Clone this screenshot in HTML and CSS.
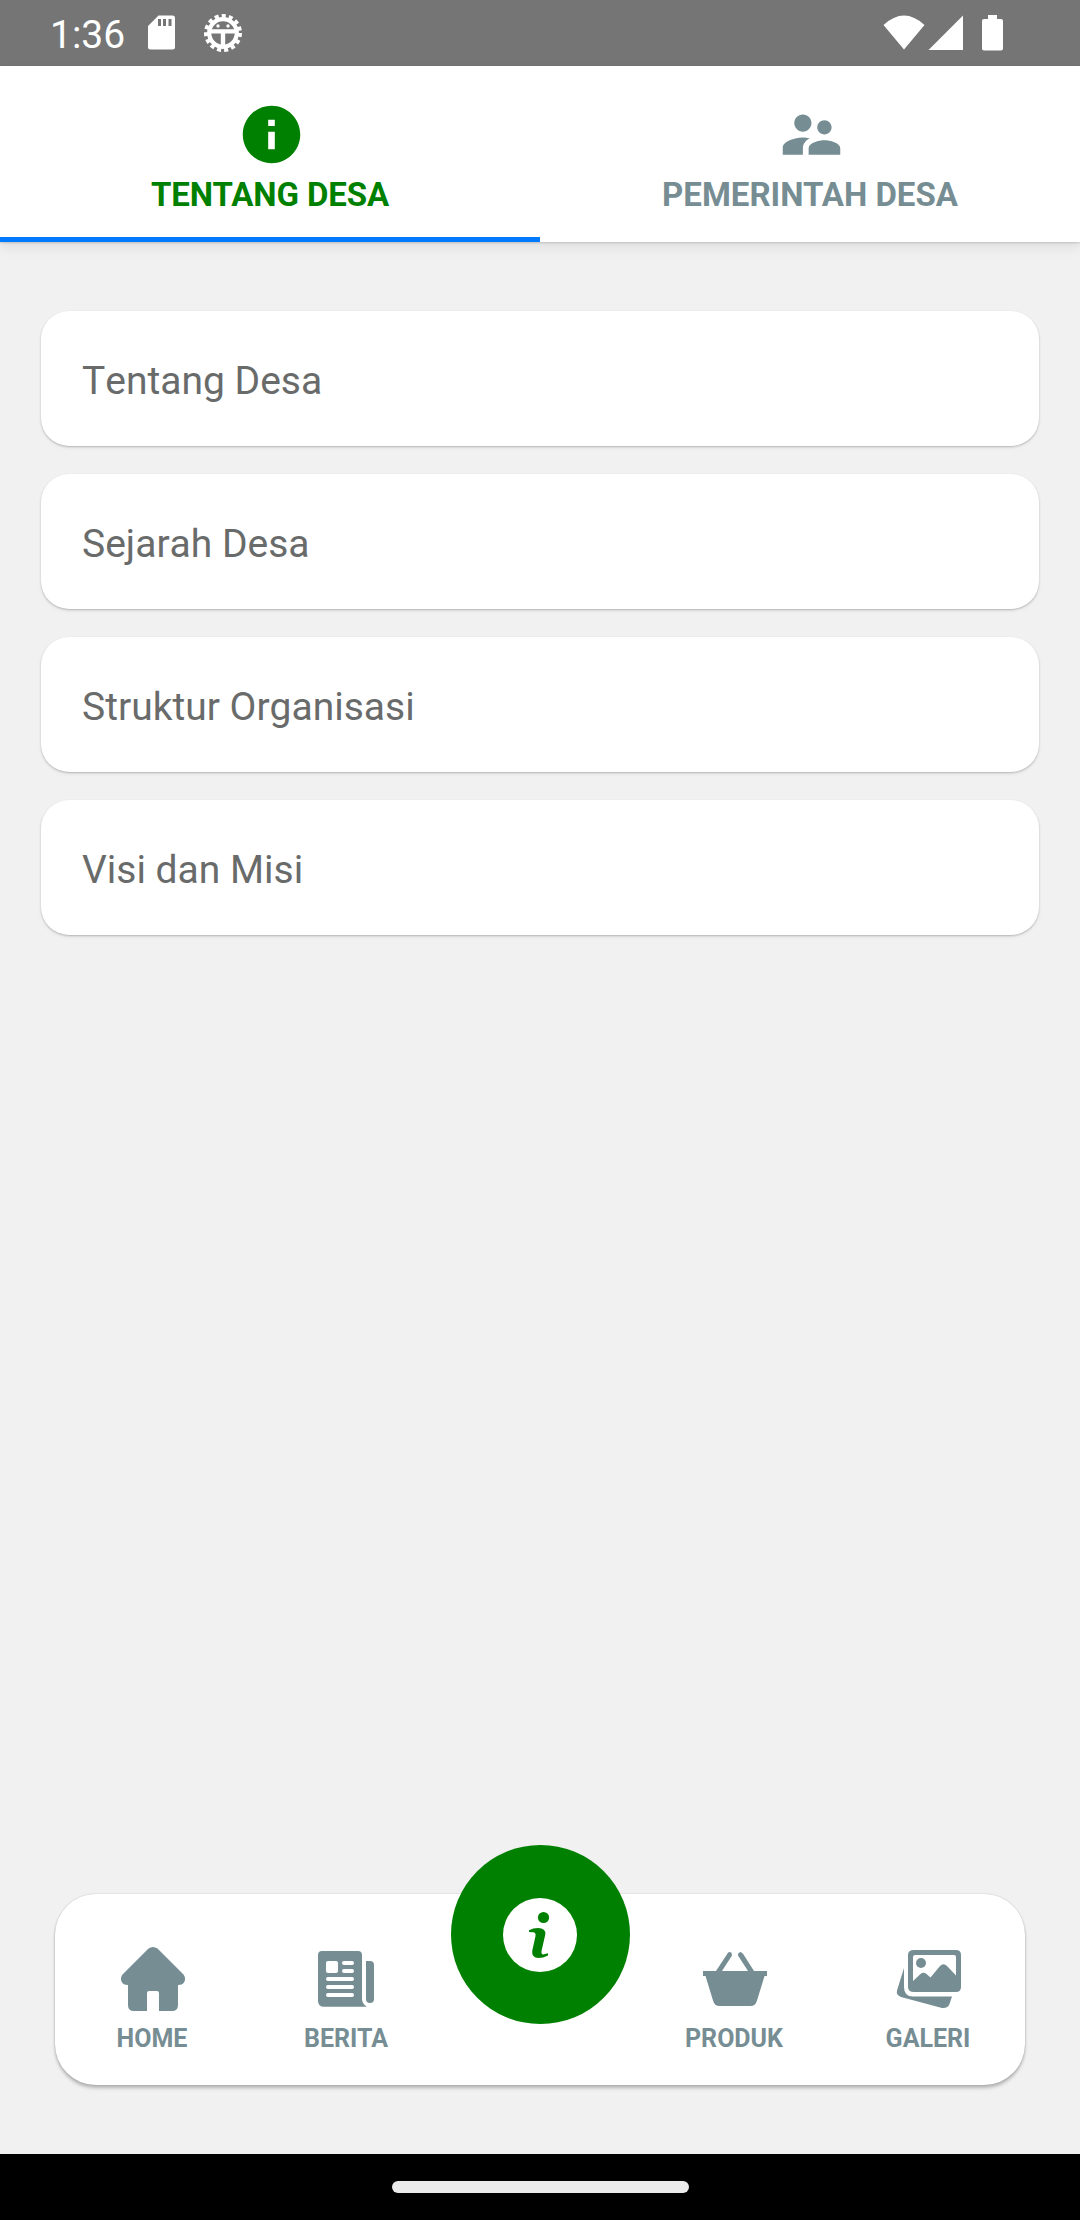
FILE: index.html
```html
<!DOCTYPE html>
<html lang="id">
<head>
<meta charset="utf-8">
<title>Tentang Desa</title>
<link rel="stylesheet" href="styles.css">
</head>
<body>
<div class="screen">
  <header class="status">
    <span class="clock">1:36</span>
    <svg class="sd" width="28" height="36" viewBox="0 0 28 36"><path fill-rule="evenodd" d="M10.500 0.500H24.500Q27 0.500 27 3V32Q27 34.500 24.500 34.500H2.500Q0 34.500 0 32V11ZM10 4v7h3V4zM15 4v7h3V4zM20.500 4v7h3V4z"/></svg>
    <svg class="gear" width="40" height="40" viewBox="-20 -20 40 40">
      <circle r="13.800" fill="none" stroke="#fff" stroke-width="4.200"/>
      <circle r="17" fill="none" stroke="#fff" stroke-width="4" stroke-dasharray="4 3.121"/>
      <path d="M-14-3.800H14V.4H2.200V14H-2.200V.4H-14z"/><circle cx="-5" cy="-7" r="1.700"/><circle cx="5" cy="-7" r="1.700"/>
    </svg>
    <div class="signals">
      <svg width="42" height="36" viewBox="0 0 42 36"><path d="M0.500 10Q21-9 41.500 10L21 34.500Z"/></svg>
      <svg class="cell" width="36" height="36" viewBox="0 0 36 36"><path d="M35 0.500V35H0.500Z"/></svg>
      <svg class="battery" width="21" height="36" viewBox="0 0 21 36"><path d="M6 0H15V4H19Q21 4 21 6V33.500Q21 35.500 19 35.500H2Q0 35.500 0 33.500V6Q0 4 2 4H6Z"/></svg>
    </div>
  </header>

  <nav class="tabs">
    <div class="tab tab-active">
      <svg width="69" height="69" viewBox="0 0 24 24"><path d="M12 2C6.480 2 2 6.480 2 12s4.480 10 10 10 10-4.480 10-10S17.520 2 12 2zm1.150 15.150h-2.300v-6.150h2.300zm0-8.100h-2.300V6.850h2.300z"/></svg>
      <span>TENTANG DESA</span>
    </div>
    <div class="tab">
      <svg width="69" height="69" viewBox="0 0 24 24"><path d="M16.500 12c1.380 0 2.490-1.120 2.490-2.500S17.880 7 16.500 7C15.120 7 14 8.120 14 9.500s1.120 2.500 2.500 2.500zM9 11c1.660 0 2.990-1.340 2.990-3S10.660 5 9 5C7.340 5 6 6.340 6 8s1.340 3 3 3zm7.500 3c-1.830 0-5.500.920-5.500 2.750V19h11v-2.250c0-1.830-3.670-2.750-5.500-2.750zM9 13c-2.330 0-7 1.170-7 3.500V19h7v-2.250c0-.850.330-2.340 2.370-3.470C10.500 13.100 9.660 13 9 13z"/></svg>
      <span>PEMERINTAH DESA</span>
    </div>
  </nav>

  <main class="list">
    <div class="card">Tentang Desa</div>
    <div class="card">Sejarah Desa</div>
    <div class="card">Struktur Organisasi</div>
    <div class="card">Visi dan Misi</div>
  </main>

  <nav class="dock">
    <div class="item">
      <svg width="80" height="80" viewBox="0 0 80 80"><path d="M36.500 9.500Q41 6.500 45.500 9.500L71.500 35.500Q74 39 72.500 42.500Q71 46 66 46V66Q66 72 60 72H47V54Q47 52 45 52H37Q35 52 35 54V72H22Q16 72 16 66V46Q11 46 9.500 42.500Q8 39 10.500 35.500Z"/></svg>
      <span>HOME</span>
    </div>
    <div class="item">
      <svg width="80" height="80" viewBox="0 0 80 80"><path fill-rule="evenodd" d="M16 12H52Q56 12 56 16V60Q56 65 61 67.800H18Q12 67.800 12 61.800V16Q12 12 16 12ZM22 22Q20 22 20 24V32Q20 34 22 34H30Q32 34 32 32V24Q32 22 30 22ZM38 22a2 2 0 0 0 0 4H46a2 2 0 0 0 0-4ZM38 30a2 2 0 0 0 0 4H46a2 2 0 0 0 0-4ZM22 38a2 2 0 0 0 0 4H46a2 2 0 0 0 0-4ZM22 46a2 2 0 0 0 0 4H46a2 2 0 0 0 0-4ZM22 54a2 2 0 0 0 0 4H46a2 2 0 0 0 0-4Z"/><path d="M60 22H64Q68 22 68 26V60a4 4 0 0 1-8 0Z"/></svg>
      <span>BERITA</span>
    </div>
    <div class="item item-center">
      <div class="fab">
        <svg width="76" height="76" viewBox="0 0 76 76"><circle class="disc" cx="38" cy="38" r="37"/><circle class="mark" cx="41.500" cy="20.500" r="5.600"/><path class="mark" d="M27 33.200Q31 31 36 31Q44 31 43.300 37.500L39.500 54Q39 58 42 57.300L46 56.200V58.500Q41 61 36.500 61Q29.500 60.500 30.200 54L33.500 39Q34 35.500 31 35.200L27 35Z"/></svg>
      </div>
    </div>
    <div class="item">
      <svg width="80" height="80" viewBox="0 0 80 80"><path d="M9 32H22L33.500 14.500Q35.500 12 37.500 14L38 16.500L28 32H54L44 16.500Q43.500 13.500 46.500 13Q48 13 49.500 15.500L60 32H73V37H70.500L63 61.500Q61.500 67 56.500 67H25.500Q20.500 67 19 61.500L11.500 37H9Z"/></svg>
      <span>PRODUK</span>
    </div>
    <div class="item">
      <svg width="80" height="80" viewBox="0 0 80 80"><path fill-rule="evenodd" d="M26 11H68Q73 11 73 16V48Q73 53 68 53H26Q20 53 20 48V16Q20 11 26 11ZM27 16Q25 16 25 18V42L32.500 35Q35.500 32.500 38.500 35L42.500 38.500L52 27Q55.500 23.500 59 27L68 36.500V18Q68 16 66 16Z"/><circle cx="33" cy="24" r="5"/><path d="M16 29V48Q16 57.500 25 57.500H64L61.500 65Q60 69.500 54 69L13 58Q8 56 9 51.500Z"/></svg>
      <span>GALERI</span>
    </div>
  </nav>

  <footer class="system"><div class="handle"></div></footer>
</div>
</body>
</html>
```
FILE: styles.css
```css
* { box-sizing: border-box; }
body { margin: 0; font-family: Roboto, sans-serif; background: #f1f1f1; }
svg { display: block; flex: none; }
.screen { width: 1080px; height: 2220px; display: flex; flex-direction: column; background: #f1f1f1; overflow: hidden; }

.status { height: 66px; flex: none; display: flex; align-items: flex-start; background: #757575; color: #fff; fill: #fff; padding: 0 77px 0 50px; }
.clock { font-size: 39px; line-height: 46px; padding-top: 12px; width: 98px; }
.sd { margin-top: 15px; }
.gear { margin: 13px 0 0 27px; }
.signals { display: flex; margin: 15px 0 0 auto; }
.cell { margin-left: 3px; }
.battery { margin-left: 18px; }

.tabs { height: 176px; flex: none; display: flex; background: #fff; box-shadow: 0 1px 2px rgba(0,0,0,.16), 0 6px 12px rgba(0,0,0,.07); }
.tab { flex: 1; display: flex; flex-direction: column; align-items: center; padding-top: 34px; color: #768d93; fill: currentColor; border-bottom: 5px solid transparent; }
.tab svg { margin-left: 3px; }
.tab span { font-size: 33px; line-height: 40px; font-weight: 700; margin-top: 6px; white-space: nowrap; }
.tab-active { color: #008000; border-bottom-color: #007aff; }
.tab-active span { letter-spacing: -.1px; }

.list { flex: 1; display: flex; flex-direction: column; gap: 28px; padding: 69px 41px 0; }
.card { height: 135px; display: flex; align-items: center; padding: 4px 41px 0; border-radius: 28px; background: #fff; box-shadow: 0 1px 2px rgba(0,0,0,.22), 0 2px 4px rgba(0,0,0,.05); color: #696b6b; font-size: 39px; font-kerning: none; }

.dock { height: 191px; flex: none; display: flex; margin: 0 55px 69px; border-radius: 41px; background: #fff; box-shadow: 0 0 2px rgba(0,0,0,.2), 0 3px 3px rgba(0,0,0,.18), 0 4px 5px rgba(0,0,0,.06); }
.item { flex: 1; display: flex; flex-direction: column; align-items: center; padding-top: 45px; color: #768d93; fill: currentColor; }
.item span { font-size: 25px; line-height: 30px; font-weight: 700; margin-top: 5px; }
.item-center { padding-top: 0; }
.fab { width: 179px; height: 179px; margin-top: -49px; border-radius: 50%; background: #008000; display: flex; align-items: center; justify-content: center; }
.disc { fill: #fff; }
.mark { fill: #008000; }

.system { height: 66px; flex: none; display: flex; justify-content: center; align-items: flex-start; background: #000; padding-top: 27px; }
.handle { width: 297px; height: 12px; border-radius: 6px; background: #ebebeb; }
```
